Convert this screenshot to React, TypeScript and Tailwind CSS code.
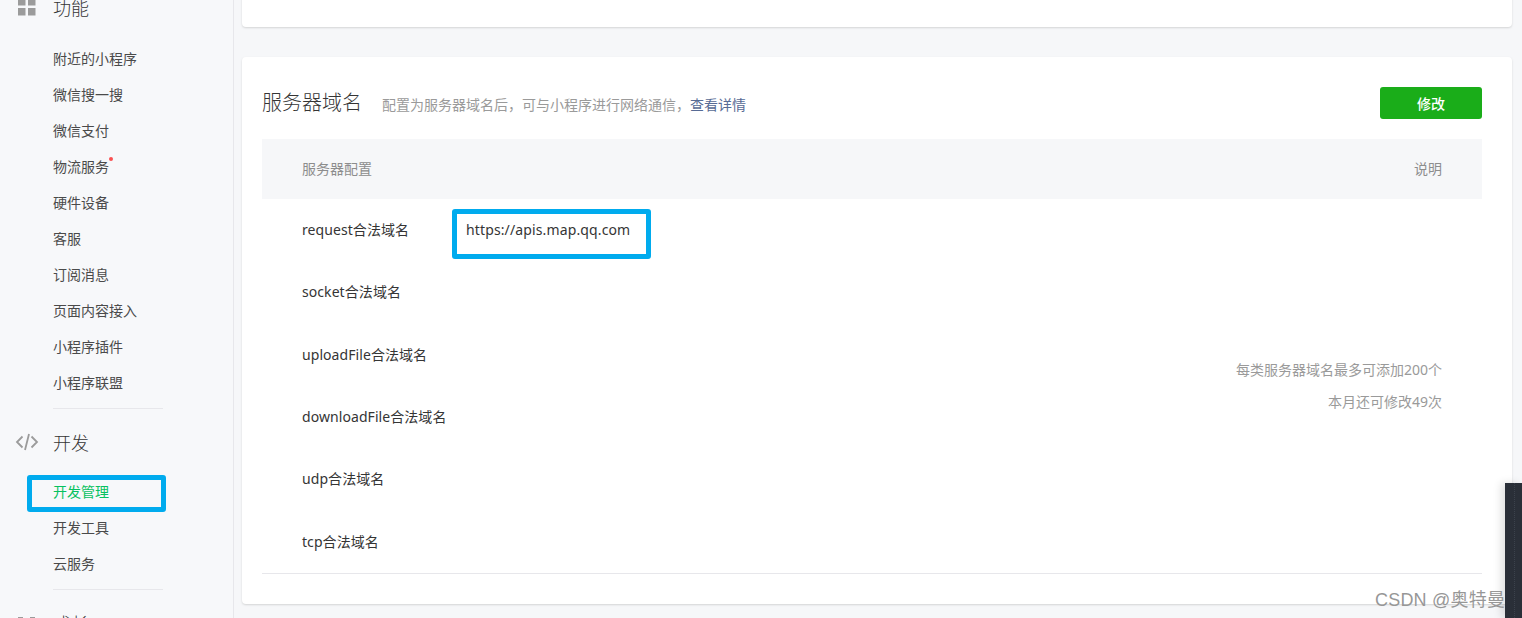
const fontStack = { fontFamily: '"Noto Sans", "Noto Sans CJK SC", sans-serif' };

const groupOne = ["附近的小程序", "微信搜一搜", "微信支付", "物流服务", "硬件设备", "客服", "订阅消息", "页面内容接入", "小程序插件", "小程序联盟"];
const groupTwo = ["开发管理", "开发工具", "云服务"];
const domainRows = [
    { label: "request合法域名", value: "https://apis.map.qq.com" },
    { label: "socket合法域名", value: "" },
    { label: "uploadFile合法域名", value: "" },
    { label: "downloadFile合法域名", value: "" },
    { label: "udp合法域名", value: "" },
    { label: "tcp合法域名", value: "" },
];

const GridIcon = () => (
    <svg width="18" height="18" viewBox="0 0 18 18" fill="#9b9b9b">
        <rect x="0" y="0" width="7.5" height="7.5" />
        <rect x="10" y="0" width="7.5" height="7.5" />
        <rect x="0" y="10" width="7.5" height="7.5" />
        <rect x="10" y="10" width="7.5" height="7.5" />
    </svg>
);

const CodeIcon = () => (
    <svg width="24" height="18" viewBox="0 0 24 18" fill="none" stroke="#9b9b9b" strokeWidth="1.8">
        <path d="M7.5 3.5 2 9l5.5 5.5" />
        <path d="M16.5 3.5 22 9l-5.5 5.5" />
        <path d="M14 1 10 17" />
    </svg>
);

const GrowthIcon = () => (
    <svg className="mt-[5px]" width="18" height="18" viewBox="0 0 18 18" fill="#9b9b9b">
        <rect x="0" y="0" width="5" height="1.5" />
        <rect x="12" y="0" width="5" height="1.5" />
    </svg>
);

const MenuHeading = ({ icon, title }: { icon: React.ReactNode; title: string }) => (
    <div className="flex h-[65px] items-start pt-[22px]">
        <div className="mt-[-1px] flex h-6 w-[53px] items-center justify-center pl-[1px]">{icon}</div>
        <span className="text-[18px] font-light leading-6 text-[#353535]">{title}</span>
    </div>
);

const MenuItem = ({ name }: { name: string }) => (
    <div className={`relative flex h-9 items-center pb-[2px] pl-[53px] text-[14px] ${name === "开发管理" ? "text-[#07c160]" : "text-[#4a4a4a]"}`}>
        <span className="relative">
            {name}
            {name === "物流服务" && <span className="absolute right-[-4px] top-[1px] h-1 w-1 rounded-full bg-[#fa5151]" />}
        </span>
    </div>
);

const Sidebar = () => (
    <aside className="relative w-[234px] shrink-0 border-r border-[#e7e7eb] bg-[#f7f8fa]">
        <div className="mt-[-26px]">
            <MenuHeading icon={<GridIcon />} title="功能" />
            <div className="mt-[2px]">
                {groupOne.map((name) => <MenuItem key={name} name={name} />)}
            </div>
            <div className="ml-[53px] mt-[7px] h-px w-[110px] bg-[#e7e7eb]" />
            <MenuHeading icon={<CodeIcon />} title="开发" />
            {groupTwo.map((name) => <MenuItem key={name} name={name} />)}
            <div className="ml-[53px] mt-[7px] h-px w-[110px] bg-[#e7e7eb]" />
            <MenuHeading icon={<GrowthIcon />} title="成长" />
        </div>
        <div className="absolute left-[27px] top-[475px] h-[37px] w-[139px] rounded-[3px] border-[5px] border-[#00abee]" />
    </aside>
);

const DomainTable = () => (
    <div className="border-b border-[#e7e7eb]">
        <div className="flex h-[60px] items-center justify-between bg-[#f6f7f9] px-10 pb-[2px] text-[14px] text-[#8d8d8d]">
            <span>服务器配置</span>
            <span>说明</span>
        </div>
        <div className="flex h-[374px]">
            <div className="flex-1">
                {domainRows.map((row) => (
                    <div key={row.label} className="flex h-[62.33px] items-center pb-[1px] pl-10 text-[14px] tracking-[0.07px] text-[#353535]">
                        <span className="w-[164px]">{row.label}</span>
                        <span className="tracking-[0.13px]">{row.value}</span>
                    </div>
                ))}
            </div>
            <div className="flex flex-col justify-center pr-10 text-right text-[14px] leading-8 text-[#9a9a9a]">
                <p>每类服务器域名最多可添加200个</p>
                <p>本月还可修改49次</p>
            </div>
        </div>
    </div>
);

export default function App() {
    return (
        <div className="relative flex h-[618px] w-[1522px] overflow-hidden bg-[#f6f7f9]" style={fontStack}>
            <Sidebar />
            <main className="flex-1 pl-2 pr-[10px]">
                <div className="mt-[-50px] h-[77px] rounded-[4px] bg-white shadow-[0_1px_2px_rgba(150,150,150,0.35)]" />
                <section className="mt-[30px] rounded-[4px] bg-white pb-[30px] pl-5 pr-[30px] pt-[30px] shadow-[0_1px_2px_rgba(150,150,150,0.35)]">
                    <div className="mb-5 flex h-8 items-center justify-between">
                        <div className="flex items-center">
                            <h2 className="text-[20px] font-light text-[#353535]">服务器域名</h2>
                            <p className="ml-5 mt-[2px] text-[14px] text-[#9a9a9a]">
                                配置为服务器域名后，可与小程序进行网络通信，<span className="text-[#576b95]">查看详情</span>
                            </p>
                        </div>
                        <button className="h-8 w-[102px] rounded-[3px] bg-[#1aad19] text-[14px] font-medium text-white">修改</button>
                    </div>
                    <DomainTable />
                </section>
            </main>
            {/* annotation box around the first domain */}
            <div className="absolute left-[452px] top-[209px] h-[50px] w-[199px] rounded-[3px] border-[5px] border-[#00abee]" />
            <div className="absolute right-0 top-[483px] h-[135px] w-[17px] bg-[#2a2f38] shadow-[-4px_0_8px_rgba(0,0,0,0.12)]">
                <div className="ml-[9px] h-full border-l border-dotted border-[#3c424c]" />
            </div>
            <span className="absolute left-[1375px] top-[588px] text-[18px] leading-6 tracking-[0.2px] text-[#979797]" style={{ fontFamily: '"Liberation Sans", "Noto Sans CJK SC", sans-serif' }}>CSDN @奥特曼</span>
        </div>
    );
}
